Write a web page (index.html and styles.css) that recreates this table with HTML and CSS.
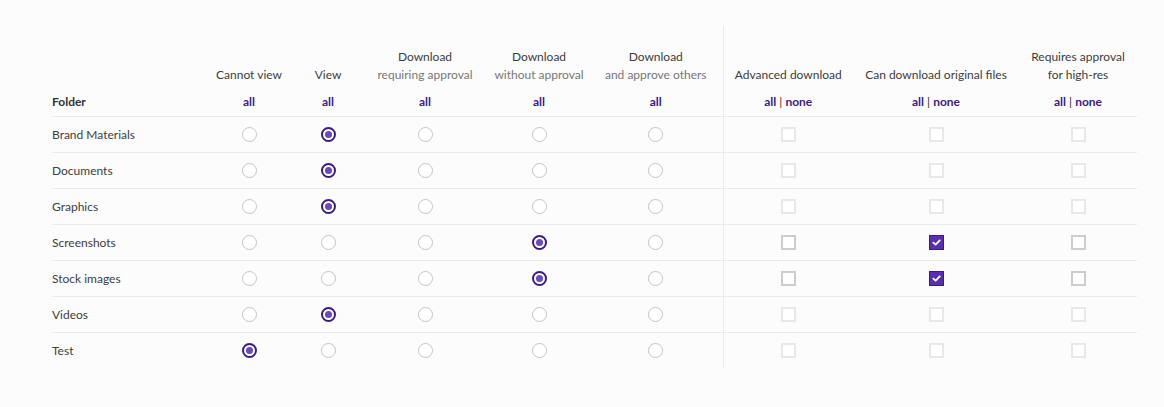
FILE: index.html
```html
<!DOCTYPE html>
<html>
<head>
<meta charset="utf-8">
<link rel="stylesheet" href="styles.css">
</head>
<body>
<table class="perms">
  <colgroup>
    <col class="c-folder"><col class="c-cannot"><col class="c-view"><col class="c-dlreq"><col class="c-dlwo"><col class="c-dlapp"><col class="c-adv"><col class="c-orig"><col class="c-hires">
  </colgroup>
  <thead>
    <tr class="labels">
      <th></th>
      <th>Cannot view</th>
      <th>View</th>
      <th>Download<br><span class="sub">requiring approval</span></th>
      <th>Download<br><span class="sub">without approval</span></th>
      <th class="pr">Download<br><span class="sub">and approve others</span></th>
      <th class="div">Advanced download</th>
      <th>Can download original files</th>
      <th>Requires approval<br>for high-res</th>
    </tr>
    <tr class="alls">
      <th class="folder">Folder</th>
      <th><a>all</a></th>
      <th><a>all</a></th>
      <th><a>all</a></th>
      <th><a>all</a></th>
      <th class="pr"><a>all</a></th>
      <th class="div"><a>all</a> | <a>none</a></th>
      <th><a>all</a> | <a>none</a></th>
      <th><a>all</a> | <a>none</a></th>
    </tr>
  </thead>
  <tbody>
    <tr>
      <td class="name">Brand Materials</td>
      <td><span class="radio"></span></td><td><span class="radio on"></span></td><td><span class="radio"></span></td><td><span class="radio"></span></td><td class="pr"><span class="radio"></span></td>
      <td class="div"><span class="cb dis"></span></td><td><span class="cb dis"></span></td><td><span class="cb dis"></span></td>
    </tr>
    <tr>
      <td class="name">Documents</td>
      <td><span class="radio"></span></td><td><span class="radio on"></span></td><td><span class="radio"></span></td><td><span class="radio"></span></td><td class="pr"><span class="radio"></span></td>
      <td class="div"><span class="cb dis"></span></td><td><span class="cb dis"></span></td><td><span class="cb dis"></span></td>
    </tr>
    <tr>
      <td class="name">Graphics</td>
      <td><span class="radio"></span></td><td><span class="radio on"></span></td><td><span class="radio"></span></td><td><span class="radio"></span></td><td class="pr"><span class="radio"></span></td>
      <td class="div"><span class="cb dis"></span></td><td><span class="cb dis"></span></td><td><span class="cb dis"></span></td>
    </tr>
    <tr>
      <td class="name">Screenshots</td>
      <td><span class="radio"></span></td><td><span class="radio"></span></td><td><span class="radio"></span></td><td><span class="radio on"></span></td><td class="pr"><span class="radio"></span></td>
      <td class="div"><span class="cb"></span></td><td><span class="cb on"><svg viewBox="0 0 10 10" width="9" height="9"><path d="M1.5 5.2 L4 7.4 L8.6 2.6" fill="none" stroke="#fff" stroke-width="2" stroke-linecap="round" stroke-linejoin="round"/></svg></span></td><td><span class="cb"></span></td>
    </tr>
    <tr>
      <td class="name">Stock images</td>
      <td><span class="radio"></span></td><td><span class="radio"></span></td><td><span class="radio"></span></td><td><span class="radio on"></span></td><td class="pr"><span class="radio"></span></td>
      <td class="div"><span class="cb"></span></td><td><span class="cb on"><svg viewBox="0 0 10 10" width="9" height="9"><path d="M1.5 5.2 L4 7.4 L8.6 2.6" fill="none" stroke="#fff" stroke-width="2" stroke-linecap="round" stroke-linejoin="round"/></svg></span></td><td><span class="cb"></span></td>
    </tr>
    <tr>
      <td class="name">Videos</td>
      <td><span class="radio"></span></td><td><span class="radio on"></span></td><td><span class="radio"></span></td><td><span class="radio"></span></td><td class="pr"><span class="radio"></span></td>
      <td class="div"><span class="cb dis"></span></td><td><span class="cb dis"></span></td><td><span class="cb dis"></span></td>
    </tr>
    <tr class="last">
      <td class="name">Test</td>
      <td><span class="radio on"></span></td><td><span class="radio"></span></td><td><span class="radio"></span></td><td><span class="radio"></span></td><td class="pr"><span class="radio"></span></td>
      <td class="div"><span class="cb dis"></span></td><td><span class="cb dis"></span></td><td><span class="cb dis"></span></td>
    </tr>
  </tbody>
</table>
</body>
</html>
```

FILE: styles.css
```css
html, body {
  margin: 0;
  padding: 0;
  background: #fcfcfd;
}
body {
  font-family: "Lato", "Liberation Sans", sans-serif;
  font-size: 12px;
  color: #3d3d3d;
}
.perms {
  border-collapse: collapse;
  margin: 26px 0 0 52px;
  table-layout: fixed;
  width: 1085px;
}
.c-folder { width: 158px; }
.c-cannot { width: 78px; }
.c-view { width: 80px; }
.c-dlreq { width: 114px; }
.c-dlwo { width: 114px; }
.c-dlapp { width: 127px; }
.c-adv { width: 130px; }
.c-orig { width: 166px; }
.c-hires { width: 118px; }

.perms th, .perms td {
  padding: 0;
  text-align: center;
  font-weight: normal;
}
.perms .pr { padding-right: 7px; }
.perms .div { border-left: 1px solid #ebebeb; }

.labels th {
  height: 62px;
  vertical-align: bottom;
  line-height: 18px;
  padding-bottom: 4px;
  color: #3d3d3d;
  box-sizing: border-box;
}
.labels .sub { color: #777; }

.alls th {
  height: 28px;
  line-height: 28px;
  border-bottom: 1px solid #ebebeb;
  vertical-align: middle;
  color: #333;
}
.alls a {
  color: #3b1a86;
  font-weight: bold;
}
.alls th.folder {
  text-align: left;
  font-weight: bold;
  color: #333;
}

tbody td {
  height: 35px;
  border-bottom: 1px solid #ebebeb;
  vertical-align: middle;
}
tbody tr.last td { border-bottom: none; height: 35px; }
tbody td.name {
  text-align: left;
  color: #3d3d3d;
}

.radio {
  display: inline-block;
  box-sizing: border-box;
  width: 15px;
  height: 15px;
  border-radius: 50%;
  border: 1.6px solid #c4c4c4;
  background: #fff;
  vertical-align: middle;
  position: relative;
  top: -1px;
}
.radio.on {
  border: 2px solid #3b1a86;
}
.radio.on::after {
  content: "";
  position: absolute;
  left: 2px;
  top: 2px;
  width: 7px;
  height: 7px;
  border-radius: 50%;
  background: #6a48c2;
}

.cb {
  display: inline-flex;
  align-items: center;
  justify-content: center;
  box-sizing: border-box;
  width: 15px;
  height: 15px;
  border: 2px solid #cdcdcd;
  background: #fff;
  vertical-align: middle;
  position: relative;
  top: -1px;
}
.cb.dis {
  border-color: #e8e8e8;
}
.cb.on {
  border: 1px solid #3b1a86;
  background: #5a2fab;
}
```
